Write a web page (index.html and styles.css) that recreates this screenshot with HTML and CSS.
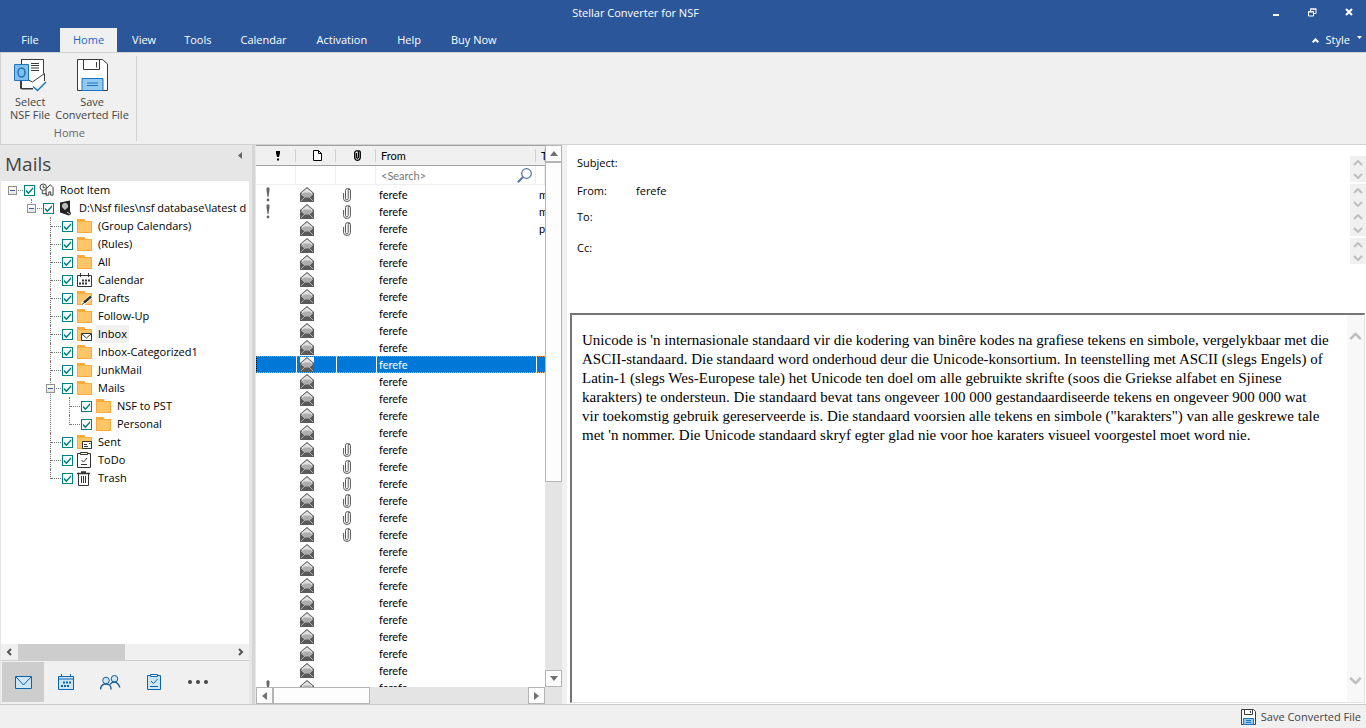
FILE: index.html
```html
<!DOCTYPE html>
<html lang="en">
<head>
<meta charset="utf-8">
<title>Stellar Converter for NSF</title>
<link rel="stylesheet" href="styles.css">
</head>
<body>
<svg class="defs" aria-hidden="true">
  <symbol id="folder" viewBox="0 0 15 14"><path d="M0 0h7.500l1 2H15v12H0z" fill="#fbab3c"/><path d="M1 3h13v10H1z" fill="#ffc566"/></symbol>
  <symbol id="save" viewBox="0 0 31 32"><path d="M.5.500h25l5 4.500v26.500H.5z" fill="#fff" stroke="#3b3b3b"/><path d="M6.500.500v10h16v-10M19.500 3v5.500" fill="none" stroke="#3b3b3b"/><path d="M5 31.500V19.500h21v12z" fill="#92c9ee" stroke="#1b74bc"/><path d="M10 24h11M10 26.500h11" stroke="#1b74bc"/></symbol>
  <symbol id="mail" viewBox="0 0 14 15"><path d="M0 6L7 0l7 6v9H0z" fill="#5a5a5a"/><path d="M7 1.200L1.200 6 4 8.500h6L12.800 6z" fill="#e2e2e2"/><path d="M4 5.500h6l2 2L9.500 10.500h-5L2 7.500z" fill="#adadad"/><path d="M1 14l4-4M13 14l-4-4M1 7l3 2.500M13 7l-3 2.500" stroke="#eee" stroke-dasharray="1 .6" stroke-width=".8" fill="none"/></symbol>
  <symbol id="clip" viewBox="0 0 8 14"><path d="M2.500 5v5.500q0 1.200 1.300 1.200T5.200 10.500V2.700Q5.200.600 6 .600T7.400 2.500v8.300Q7.400 13.400 4 13.400T.6 10.800V5M2.500 9V2.500Q2.700.600 4.500.600t2.700 1.700" fill="none" stroke="#555"/></symbol>
  <symbol id="bang" viewBox="0 0 4 15"><path d="M.5 1q1.500-1.500 3 0v2.500L2.500 10h-1L.5 3.500z" fill="#666"/><circle cx="2" cy="13" r="1.400" fill="#666"/></symbol>
  <symbol id="up" viewBox="0 0 8 5"><path d="M0 5l4-5 4 5z"/></symbol>
  <symbol id="chev" viewBox="0 0 10 6"><path d="M1 5l4-4 4 4" fill="none" stroke="currentColor" stroke-width="2"/></symbol>
</svg>
<div class="app">
  <header class="title">
    <h1>Stellar Converter for NSF</h1>
    <div class="wincontrols">
      <button aria-label="Minimize"><svg width="8" height="10"><path d="M1 8h6" stroke="#fff" stroke-width="2"/></svg></button>
      <button aria-label="Restore"><svg width="9" height="9"><path d="M2.500 3V1h5.500v4.500H6M2 1h6.500" fill="none" stroke="#fff"/><path d="M.5 3.500h5v4.500h-5zM0 4h6" fill="none" stroke="#fff"/></svg></button>
      <button aria-label="Close"><svg width="8" height="8"><path d="M1 1l6 6M7 1L1 7" stroke="#fff" stroke-width="2"/></svg></button>
    </div>
  </header>
  <nav class="tabs">
    <button class="file">File</button><button class="active">Home</button><button>View</button><button>Tools</button><button>Calendar</button><button>Activation</button><button>Help</button><button>Buy Now</button>
    <button class="style"><svg width="7" height="5"><path d="M.7 4.300L3.500 1.500l2.800 2.800" fill="none" stroke="#fff" stroke-width="2"/></svg>Style<svg class="down" width="5" height="3"><path d="M0 0h5L2.500 3z" fill="#fff"/></svg></button>
  </nav>
  <section class="ribbon">
    <div class="group">
      <div class="tools">
        <button class="select"><svg width="33" height="33" viewBox="0 0 33 33"><path d="M7 .5h22.500v14M7.500 0v30h11.500V30" fill="none" stroke="#3b3b3b"/><path d="M8 1h21v14l1 8-10 6H8z" fill="#fff"/><path d="M14.500 21l4 2 12-8.500V22M6.500 21v8.500H19" fill="none" stroke="#3b3b3b"/><path d="M17 4.500h8M17 6.500h8M17 9h8M17 11.500h8" stroke="#3b3b3b"/><path d="M.5 5.500h14v16H.5z" fill="#83bfea" stroke="#1b74bc"/><ellipse cx="7.500" cy="13.500" rx="3.500" ry="4.500" fill="none" stroke="#1b74bc" stroke-width="1.500"/><path d="M19 27.500l4.500 4L32 23" fill="none" stroke="#1b74bc" stroke-width="1.400"/></svg><span>Select<br>NSF File</span></button>
        <button class="saveb"><svg width="31" height="32"><use href="#save"/></svg><span>Save<br>Converted File</span></button>
      </div>
      <div class="caption">Home</div>
    </div>
  </section>
  <main class="work">
    <aside class="side">
      <div class="sidehead"><h2>Mails</h2><button aria-label="Collapse"><svg width="4" height="7"><path d="M4 0v7L0 3.500z" fill="#666"/></svg></button></div>
      <ul class="tree root">
        <li><div class="node"><i class="exp"></i><input type="checkbox" id="c1" checked><svg class="ic" width="15" height="14" viewBox="0 0 16 14"><circle cx="4.500" cy="4" r="3.400" fill="#fff" stroke="#333"/><path d="M4.500 2v2.500h2M3.500 8v3h5M7.500 6L12 1.300 15 4.500v8h-2.500V9h-2v3.500H7.500V6" fill="none" stroke="#333"/></svg><label for="c1">Root Item</label></div>
        <ul class="tree">
          <li><div class="node"><i class="exp"></i><input type="checkbox" id="c2" checked><svg class="ic" width="15" height="16"><path d="M2 2.500L12 .500V11l1 3-2 1.500L2 12.500z" fill="#222"/><path d="M5 4h4v4H5zM7 3v7M4 6h6" fill="none" stroke="#eee"/><circle cx="10.500" cy="13" r="2" fill="#222"/><path d="M9 12l3 2" stroke="#ccc"/></svg><label for="c2">D:\Nsf files\nsf database\latest d</label></div>
          <ul class="tree">
            <li><div class="node"><input type="checkbox" id="c3" checked><svg class="ic" width="15" height="14"><use href="#folder"/></svg><label for="c3">(Group Calendars)</label></div></li>
            <li><div class="node"><input type="checkbox" id="c4" checked><svg class="ic" width="15" height="14"><use href="#folder"/></svg><label for="c4">(Rules)</label></div></li>
            <li><div class="node"><input type="checkbox" id="c5" checked><svg class="ic" width="15" height="14"><use href="#folder"/></svg><label for="c5">All</label></div></li>
            <li><div class="node"><input type="checkbox" id="c6" checked><svg class="ic" width="15" height="14"><path d="M.5 2.500h14v11H.5zM3.500 0v4M11.500 0v4" fill="#fff" stroke="#333"/><path d="M5 7.500h2M8 7.500h2M11 7.500h2M2 10.500h2M5 10.500h2M8 10.500h2" stroke="#333" stroke-width="2"/></svg><label for="c6">Calendar</label></div></li>
            <li><div class="node"><input type="checkbox" id="c7" checked><svg class="ic" width="15" height="14"><use href="#folder"/><path d="M5 13.500l9-8" stroke="#fff" stroke-width="4"/><path d="M7 11.500l7-6" stroke="#333" stroke-width="2.500"/><path d="M5 13.500l3-2.500" stroke="#333"/></svg><label for="c7">Drafts</label></div></li>
            <li><div class="node"><input type="checkbox" id="c8" checked><svg class="ic" width="15" height="14"><use href="#folder"/></svg><label for="c8">Follow-Up</label></div></li>
            <li><div class="node current"><input type="checkbox" id="c9" checked><svg class="ic" width="15" height="14"><use href="#folder"/><path d="M4.500 6.500h10v7h-10z" fill="#fff" stroke="#333"/><path d="M5 7l4.500 4L14 7" fill="none" stroke="#333"/></svg><label for="c9">Inbox</label></div></li>
            <li><div class="node"><input type="checkbox" id="c10" checked><svg class="ic" width="15" height="14"><use href="#folder"/></svg><label for="c10">Inbox-Categorized1</label></div></li>
            <li><div class="node"><input type="checkbox" id="c11" checked><svg class="ic" width="15" height="14"><use href="#folder"/></svg><label for="c11">JunkMail</label></div></li>
            <li><div class="node"><i class="exp"></i><input type="checkbox" id="c12" checked><svg class="ic" width="15" height="14"><use href="#folder"/></svg><label for="c12">Mails</label></div>
              <ul class="tree">
                <li><div class="node"><input type="checkbox" id="c13" checked><svg class="ic" width="15" height="14"><use href="#folder"/></svg><label for="c13">NSF to PST</label></div></li>
                <li><div class="node"><input type="checkbox" id="c14" checked><svg class="ic" width="15" height="14"><use href="#folder"/></svg><label for="c14">Personal</label></div></li>
              </ul></li>
            <li><div class="node"><input type="checkbox" id="c15" checked><svg class="ic" width="15" height="14"><use href="#folder"/><path d="M5.500 6.500h9v7h-9z" fill="#fff" stroke="#333"/><path d="M7 9.500h3M7 11.500h4M12 8.500h1.500" stroke="#333"/></svg><label for="c15">Sent</label></div></li>
            <li><div class="node"><input type="checkbox" id="c16" checked><svg class="ic" width="15" height="16"><path d="M.5 1.500h13v14H.5z" fill="#fff" stroke="#333"/><path d="M3.500.500h7v2h-7z" fill="#fff" stroke="#333"/><path d="M4.500 8l2 2L10 6M4 12.500h6" fill="none" stroke="#333"/></svg><label for="c16">ToDo</label></div></li>
            <li><div class="node"><input type="checkbox" id="c17" checked><svg class="ic" width="15" height="15"><path d="M1.500 3v11.500h10V3" fill="#fff" stroke="#333"/><path d="M0 2.500h13M4 1h5" stroke="#333" stroke-width="1.400"/><path d="M4.500 5v7M6.500 5v7M8.500 5v7" stroke="#333"/></svg><label for="c17">Trash</label></div></li>
          </ul></li>
        </ul></li>
      </ul>
      <div class="hbar"><svg width="6" height="8"><path d="M5 1L2 4l3 3" fill="none" stroke="#555" stroke-width="2"/></svg><div class="track"><i></i></div><svg width="6" height="8"><path d="M1 1l3 3-3 3" fill="none" stroke="#555" stroke-width="2"/></svg></div>
      <nav class="switch">
        <button class="on" aria-label="Mail"><svg width="17" height="13"><path d="M.5.500h16v12H.5z" fill="#cde6f7" stroke="#0a64ad"/><path d="M1 1l7.500 8L16 1" fill="none" stroke="#0a64ad"/></svg></button>
        <button aria-label="Calendar"><svg width="16" height="16"><path d="M.5 2.500h15v13H.5z" fill="#cde6f7" stroke="#0a64ad"/><path d="M0 5h16M3.500 0v3M12.500 0v3" stroke="#0a64ad"/><path d="M5 8.500h2M8 8.500h2M11 8.500h2M3 12h2M6 12h2M9 12h2" stroke="#0a64ad" stroke-width="2"/></svg></button>
        <button aria-label="People"><svg width="21" height="15"><circle cx="6" cy="5.500" r="3.300" fill="#cde6f7" stroke="#1b5e94"/><circle cx="14.500" cy="3.800" r="3.300" fill="#cde6f7" stroke="#1b5e94"/><path d="M.5 14.500q.3-5.500 5.500-5.500t5 5.500M10 9.500Q11.500 7 14.500 7t5.500 5.500" fill="none" stroke="#1b5e94" stroke-width="1.400"/></svg></button>
        <button aria-label="Tasks"><svg width="14" height="16"><path d="M.5 1.500h13v14H.5z" fill="#cde6f7" stroke="#0a64ad"/><path d="M3.500.500h7v2h-7z" fill="#fff" stroke="#0a64ad"/><path d="M4 7l2.500 2.500L10.500 5M3 12.500h8" fill="none" stroke="#0a64ad"/></svg></button>
        <button aria-label="More"><svg width="20" height="4" fill="#444"><circle cx="2" cy="2" r="2"/><circle cx="10" cy="2" r="2"/><circle cx="18" cy="2" r="2"/></svg></button>
      </nav>
    </aside>
    <div class="split"></div>
    <section class="list">
      <div class="viewport">
        <table>
          <colgroup><col class="w1"><col class="w1"><col class="w1"><col class="w2"><col></colgroup>
          <thead>
            <tr class="heads"><th aria-label="Importance"><svg width="4" height="11"><path d="M0 1h4v2L3 7H1L0 3z"/><path d="M1 8.500h2v2H1z"/></svg></th><th aria-label="Type"><svg width="9" height="11"><path d="M.5.500h5l3 3v7h-8zM5.500.500v3h3" fill="#fff" stroke="#000"/></svg></th><th aria-label="Attachment"><svg width="7" height="11"><path d="M2.500 3v4.500q1 1.500 2 0V2Q3.500 0 2 1T.7 3v4.500Q1 10.300 3.500 10.300T6.300 7.500V2Q6 .700 4.500.700" fill="none" stroke="#000" stroke-width="1.300"/></svg></th><th class="t">From</th><th class="t">T</th></tr>
            <tr class="find"><td></td><td></td><td></td><td><div><input type="text" placeholder="&lt;Search&gt;" aria-label="Search From"><svg width="15" height="15"><circle cx="9.500" cy="5.500" r="4.800" fill="none" stroke="#52779f" stroke-width="1.200"/><path d="M6 9L.8 14.200" stroke="#52779f" stroke-width="2"/></svg></div></td><td></td></tr>
          </thead>
          <tbody>
            <tr><td><svg class="b" width="4" height="15"><use href="#bang"/></svg></td><td><svg width="14" height="15"><use href="#mail"/></svg></td><td><svg class="p" width="8" height="14"><use href="#clip"/></svg></td><td>ferefe</td><td>m</td></tr>
            <tr><td><svg class="b" width="4" height="15"><use href="#bang"/></svg></td><td><svg width="14" height="15"><use href="#mail"/></svg></td><td><svg class="p" width="8" height="14"><use href="#clip"/></svg></td><td>ferefe</td><td>m</td></tr>
            <tr><td></td><td><svg width="14" height="15"><use href="#mail"/></svg></td><td><svg class="p" width="8" height="14"><use href="#clip"/></svg></td><td>ferefe</td><td>p</td></tr>
            <tr><td></td><td><svg width="14" height="15"><use href="#mail"/></svg></td><td></td><td>ferefe</td><td></td></tr>
            <tr><td></td><td><svg width="14" height="15"><use href="#mail"/></svg></td><td></td><td>ferefe</td><td></td></tr>
            <tr><td></td><td><svg width="14" height="15"><use href="#mail"/></svg></td><td></td><td>ferefe</td><td></td></tr>
            <tr><td></td><td><svg width="14" height="15"><use href="#mail"/></svg></td><td></td><td>ferefe</td><td></td></tr>
            <tr><td></td><td><svg width="14" height="15"><use href="#mail"/></svg></td><td></td><td>ferefe</td><td></td></tr>
            <tr><td></td><td><svg width="14" height="15"><use href="#mail"/></svg></td><td></td><td>ferefe</td><td></td></tr>
            <tr><td></td><td><svg width="14" height="15"><use href="#mail"/></svg></td><td></td><td>ferefe</td><td></td></tr>
            <tr class="sel"><td></td><td><svg width="14" height="15"><use href="#mail"/></svg></td><td></td><td>ferefe</td><td></td></tr>
            <tr><td></td><td><svg width="14" height="15"><use href="#mail"/></svg></td><td></td><td>ferefe</td><td></td></tr>
            <tr><td></td><td><svg width="14" height="15"><use href="#mail"/></svg></td><td></td><td>ferefe</td><td></td></tr>
            <tr><td></td><td><svg width="14" height="15"><use href="#mail"/></svg></td><td></td><td>ferefe</td><td></td></tr>
            <tr><td></td><td><svg width="14" height="15"><use href="#mail"/></svg></td><td></td><td>ferefe</td><td></td></tr>
            <tr><td></td><td><svg width="14" height="15"><use href="#mail"/></svg></td><td><svg class="p" width="8" height="14"><use href="#clip"/></svg></td><td>ferefe</td><td></td></tr>
            <tr><td></td><td><svg width="14" height="15"><use href="#mail"/></svg></td><td><svg class="p" width="8" height="14"><use href="#clip"/></svg></td><td>ferefe</td><td></td></tr>
            <tr><td></td><td><svg width="14" height="15"><use href="#mail"/></svg></td><td><svg class="p" width="8" height="14"><use href="#clip"/></svg></td><td>ferefe</td><td></td></tr>
            <tr><td></td><td><svg width="14" height="15"><use href="#mail"/></svg></td><td><svg class="p" width="8" height="14"><use href="#clip"/></svg></td><td>ferefe</td><td></td></tr>
            <tr><td></td><td><svg width="14" height="15"><use href="#mail"/></svg></td><td><svg class="p" width="8" height="14"><use href="#clip"/></svg></td><td>ferefe</td><td></td></tr>
            <tr><td></td><td><svg width="14" height="15"><use href="#mail"/></svg></td><td><svg class="p" width="8" height="14"><use href="#clip"/></svg></td><td>ferefe</td><td></td></tr>
            <tr><td></td><td><svg width="14" height="15"><use href="#mail"/></svg></td><td></td><td>ferefe</td><td></td></tr>
            <tr><td></td><td><svg width="14" height="15"><use href="#mail"/></svg></td><td></td><td>ferefe</td><td></td></tr>
            <tr><td></td><td><svg width="14" height="15"><use href="#mail"/></svg></td><td></td><td>ferefe</td><td></td></tr>
            <tr><td></td><td><svg width="14" height="15"><use href="#mail"/></svg></td><td></td><td>ferefe</td><td></td></tr>
            <tr><td></td><td><svg width="14" height="15"><use href="#mail"/></svg></td><td></td><td>ferefe</td><td></td></tr>
            <tr><td></td><td><svg width="14" height="15"><use href="#mail"/></svg></td><td></td><td>ferefe</td><td></td></tr>
            <tr><td></td><td><svg width="14" height="15"><use href="#mail"/></svg></td><td></td><td>ferefe</td><td></td></tr>
            <tr><td></td><td><svg width="14" height="15"><use href="#mail"/></svg></td><td></td><td>ferefe</td><td></td></tr>
            <tr><td><svg class="b" width="4" height="15"><use href="#bang"/></svg></td><td><svg width="14" height="15"><use href="#mail"/></svg></td><td></td><td>ferefe</td><td></td></tr>
          </tbody>
        </table>
      </div>
      <div class="vscroll"><button aria-label="Scroll up"><svg width="8" height="5"><use href="#up"/></svg></button><div class="track"><i></i></div><button aria-label="Scroll down"><svg class="flip" width="8" height="5"><use href="#up"/></svg></button></div>
      <div class="hscroll"><button aria-label="Scroll left"><svg width="5" height="8"><path d="M5 0v8L0 4z"/></svg></button><div class="track"><i></i></div><button aria-label="Scroll right"><svg width="5" height="8"><path d="M0 0v8l5-4z"/></svg></button></div>
    </section>
    <section class="preview">
      <dl class="fields">
        <div><dt>Subject:</dt><dd></dd><span class="spin"><svg width="10" height="6"><use href="#chev"/></svg><svg class="flip" width="10" height="6"><use href="#chev"/></svg></span></div>
        <div class="gap"><dt>From:</dt><dd>ferefe</dd><span class="spin"><svg width="10" height="6"><use href="#chev"/></svg><svg class="flip" width="10" height="6"><use href="#chev"/></svg></span></div>
        <div><dt>To:</dt><dd></dd><span class="spin"><svg width="10" height="6"><use href="#chev"/></svg><svg class="flip" width="10" height="6"><use href="#chev"/></svg></span></div>
        <div class="gap cc"><dt>Cc:</dt><dd></dd><span class="spin"><svg width="10" height="6"><use href="#chev"/></svg><svg class="flip" width="10" height="6"><use href="#chev"/></svg></span></div>
      </dl>
      <article class="message">
        <p lang="af">Unicode is 'n internasionale standaard vir die kodering van binêre kodes na grafiese tekens en simbole, vergelykbaar met die ASCII-standaard. Die standaard word onderhoud deur die Unicode-konsortium. In teenstelling met ASCII (slegs Engels) of Latin-1 (slegs Wes-Europese tale) het Unicode ten doel om alle gebruikte skrifte (soos die Griekse alfabet en Sjinese karakters) te ondersteun. Die standaard bevat tans ongeveer 100 000 gestandaardiseerde tekens en ongeveer 900 000 wat vir&nbsp;toekomstig gebruik gereserveerde is. Die standaard voorsien alle tekens en simbole ("karakters") van alle geskrewe tale met&nbsp;'n nommer. Die Unicode standaard skryf egter glad nie voor hoe karaters visueel voorgestel moet word nie.</p>
        <div class="rail"><svg width="13" height="9" viewBox="0 0 10 6"><use href="#chev"/></svg><svg class="flip" width="13" height="9" viewBox="0 0 10 6"><use href="#chev"/></svg></div>
      </article>
    </section>
  </main>
  <footer class="status"><button><svg width="15" height="16" viewBox="0 0 15 16"><path d="M.5.500h12l2 2v13H.5z" fill="#fff" stroke="#3b3b3b"/><path d="M3.500.500v5h8v-5M9.500 2v2" fill="none" stroke="#3b3b3b"/><path d="M2.500 15.500v-6h10v6z" fill="#92c9ee" stroke="#1b74bc"/><path d="M5 11.500h5M5 13.500h5" stroke="#1b74bc"/></svg>Save Converted File</button></footer>
</div>
</body>
</html>
```

FILE: styles.css
```css
* { box-sizing: border-box; }
body, h1, h2, ul, dl, dd, p { margin: 0; padding: 0; }
body { font: 11px/16px "Open Sans", "Noto Sans", sans-serif; color: #000; }
button { font: inherit; color: inherit; background: none; border: 0; padding: 0; margin: 0; }
svg { display: block; flex: none; }
.defs { display: none; }
.flip { transform: rotate(180deg); }
.app { display: flex; flex-direction: column; height: 100vh; background: #f0f0f0; overflow: hidden; }

.title { display: grid; grid-template-columns: 1fr auto 1fr; align-items: center; height: 28px; background: #2b579a; color: #fff; padding-right: 13px; }
.title h1 { grid-column: 2; font: inherit; padding: 0 82px 2px 0; }
.wincontrols { display: flex; justify-content: flex-end; align-items: center; gap: 28px; padding-bottom: 4px; }

.tabs { display: flex; height: 24px; background: #2b579a; color: #fff; }
.tabs button { padding: 0 14px; }
.tabs button:nth-child(n+5) { padding: 0 15px; }
.tabs .file { width: 60px; }
.tabs .active { background: #f0f0f0; color: #1a66c2; padding: 0 13px; }
.tabs .active + button { padding: 0 14px 0 15px; }
.tabs .style.style { display: flex; align-items: center; gap: 7px; margin-left: auto; padding-right: 4px; }
.tabs .down { align-self: flex-start; margin-top: 8px; }

.ribbon { display: flex; height: 93px; border: 1px solid #d2d2d2; border-width: 1px 0 1px 1px; color: #444; }
.group { display: flex; flex-direction: column; justify-content: space-between; margin: 3px 0; border-right: 1px solid #d2d2d2; padding: 3px 7px 1px 9px; }
.tools { display: flex; gap: 5px; }
.tools button { display: flex; flex-direction: column; align-items: center; gap: 3px; line-height: 13px; }
.tools .saveb { gap: 4px; }
.caption { text-align: center; color: #666; line-height: 15px; }

.work { flex: 1; display: flex; min-height: 0; }
.side { width: 250px; display: flex; flex-direction: column; background: #e6e6e6; padding-right: 1px; }
.sidehead { display: flex; justify-content: space-between; align-items: flex-start; height: 36px; padding: 7px 7px 0 5px; color: #444; }
.sidehead h2 { font-size: 19px; font-weight: 400; line-height: 24px; }
.tree { list-style: none; padding-left: 19px; }
.root { flex: 1; min-height: 0; overflow: hidden; background: #fff; margin-left: 1px; padding-left: 7px; white-space: nowrap; }
.tree li { position: relative; }
.tree .tree > li::before { content: ""; position: absolute; left: 4px; top: 0; bottom: 0; border-left: 1px dotted #777; }
.tree .tree > li:last-child::before { bottom: auto; height: 10px; }
.node { position: relative; display: flex; align-items: center; height: 18px; padding-left: 16px; }
.node::before { content: ""; position: absolute; left: 5px; width: 10px; top: 9px; border-top: 1px dotted #777; }
.exp { position: absolute; left: 0; top: 5px; width: 9px; height: 9px; border: 1px solid #919191; background: linear-gradient(#3a5c9c, #3a5c9c) center / 5px 1px no-repeat, linear-gradient(#fff, #e4e4e4); }
.node input { appearance: none; margin: 1px 0 0; flex: none; width: 11px; height: 11px; border: 1px solid #008080; background: #fff; }
.node input:checked::before { content: ""; display: block; width: 9px; height: 9px; background: #008080; clip-path: polygon(10% 42%, 38% 68%, 90% 12%, 90% 34%, 38% 92%, 10% 64%); }
.ic { margin: 0 4px; }
.node label { padding: 0 2px; line-height: 18px; }
.current label { background: #f0f0f0; }
.hbar { display: flex; align-items: center; gap: 6px; height: 16px; margin-left: 1px; padding: 0 5px; background: #f0f0f0; }
.hbar .track { flex: 1; align-self: stretch; }
.hbar i { display: block; width: 50%; height: 100%; background: #cdcdcd; }
.switch { display: flex; height: 44px; margin-left: 1px; padding: 1px 1px 2px; border-top: 1px solid #cdcdcd; background: #f0f0f0; }
.switch button { display: grid; place-items: center; width: 44px; }
.switch .on { width: 42px; background: #cdcdcd; }
.split { width: 6px; border: solid #e6e6e6; border-width: 0 1px 0 2px; background: #d6d6d6; }

.list { width: 306px; display: grid; grid-template: minmax(0, 1fr) 17px / minmax(0, 1fr) 17px; background: #e4e4e4; }
.viewport { overflow: hidden; background: #fff; font-family: "Lato", "Open Sans", sans-serif; }
.list table { width: 100%; table-layout: fixed; border-collapse: separate; border-spacing: 0; }
.w1 { width: 40px; }
.w2 { width: 160px; }
.list th, .list td { padding: 0; font-weight: 400; white-space: nowrap; overflow: hidden; }
.heads { background: #f0f0f0; }
.heads th { height: 21px; border-top: 1px solid #a0a0a0; border-bottom: 1px solid #a0a0a0; background: linear-gradient(#d0d0d0, #d0d0d0) right center / 1px 13px no-repeat; padding-left: 3px; }
.heads svg { margin: auto; }
.heads .t { text-align: left; padding-left: 5px; }
.find td { height: 19px; border-right: 1px solid #eee; border-bottom: 1px solid #eee; }
.find div { display: flex; align-items: center; padding: 0 3px 0 5px; }
.find input { flex: 1; min-width: 0; border: 0; padding: 0; height: 18px; font: inherit; background: none; }
.find input::placeholder { color: #777; opacity: 1; }
.list tbody td { height: 17px; line-height: 17px; padding-left: 3px; }
.list tbody td:nth-child(2) { padding-left: 4px; }
.list tbody .b { margin-left: 7px; }
.list tbody .p { margin-left: 4px; }
.list tbody::before { content: ""; display: block; height: 1px; }
.list .sel td { color: #fff; background: #0078d7; border-top: 1px dotted #f28a2d; border-bottom: 1px dotted #f0b37a; line-height: 15px; border-left: 1px solid #fff; padding-left: 2px; }
.list .sel td:first-child { border-left: 1px dotted #000; }
.list .sel td:nth-child(2) { padding-left: 3px; }
.sel svg { background: #fff; }
.vscroll { display: flex; flex-direction: column; }
.hscroll { display: flex; }
.list button { display: grid; place-items: center; width: 17px; height: 17px; background: #fdfdfd; border: 1px solid #b4b4b4; fill: #707070; }
.list .track { flex: 1; }
.list .track i { display: block; background: #fdfdfd; border: 1px solid #b4b4b4; }
.vscroll i { height: 63%; }
.hscroll i { width: 38%; height: 100%; }

.preview { flex: 1; min-width: 0; display: flex; flex-direction: column; margin-left: 5px; background: #fff; }
.fields { padding-top: 11px; height: 168px; }
.fields > div { display: flex; height: 26px; line-height: 14px; padding-left: 10px; }
.fields .gap { margin-top: 2px; }
.fields .cc dt { padding-top: 3px; }
.fields dt { width: 59px; }
.fields dd { flex: 1; }
.spin { display: flex; flex-direction: column; justify-content: space-between; align-items: center; width: 16px; padding: 4px 0 3px; background: #f0f0f0; color: #bfbfbf; }
.message { flex: 1; min-height: 0; display: flex; margin: 0 1px 1px 3px; border: 2px solid #e4e4e4; border-top-color: #757575; border-left-color: #757575; border-bottom-width: 1px; border-right-width: 1px; }
.message p { flex: 1; font: 15px/19px "Liberation Serif", serif; padding: 16px 14px 0 10px; }
.rail { display: flex; flex-direction: column; justify-content: space-between; align-items: center; width: 17px; padding: 17px 0; background: #f8f8f8; color: #bfbfbf; }

.status { display: flex; justify-content: flex-end; height: 24px; border-top: 1px solid #c8c8c8; padding-right: 5px; color: #444; }
.status button { display: flex; align-items: center; gap: 5px; }
```
